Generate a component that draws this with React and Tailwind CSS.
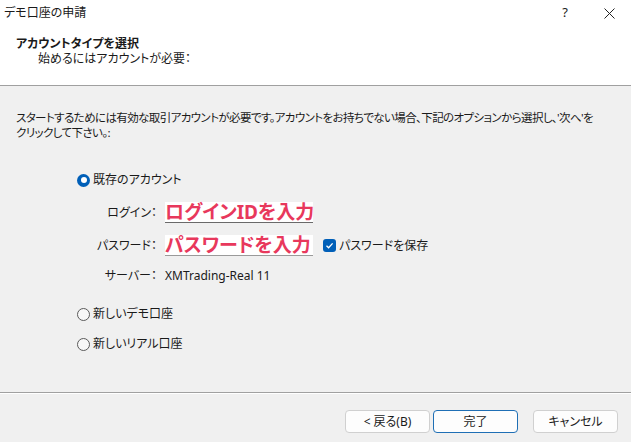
import React from 'react';

const font = "font-['Noto_Sans','Noto_Sans_CJK_JP',sans-serif] [font-feature-settings:'palt']";

const Radio = ({ checked, label }) => (
     <div className="flex items-center h-[16px] pl-[77px] gap-[3px]">
          {checked ? (
               <span className="w-[13px] h-[13px] rounded-full bg-[#005fb8] flex items-center justify-center">
                    <span className="w-[6px] h-[6px] rounded-full bg-white"></span>
               </span>
          ) : (
               <span className="w-[13px] h-[13px] rounded-full border border-[#5a5a5a] bg-[#f7f7f7]"></span>
          )}
          <span>{label}</span>
     </div>
);

const Button = ({ children, primary }) => (
     <button
          className={`w-[85px] h-[23px] rounded-[4px] bg-[#fdfdfd] text-[12px] text-[#1a1a1a] border ${primary ? 'border-[#1f6fb5]' : 'border-[#d0d0d0]'}`}
     >
          {children}
     </button>
);

export default function App() {
     return (
          <div className={`w-[631px] h-[442px] bg-[#f0f0f0] flex flex-col text-[12px] text-[#1a1a1a] ${font}`}>
               {/* header */}
               <div className="h-[86px] bg-white border-b border-[#a0a0a0] flex flex-col">
                    <div className="h-[26px] flex items-center justify-between pl-[4px] pr-[16px]">
                         <span>デモ口座の申請</span>
                         <div className="flex items-center gap-[36px]">
                              <span className="text-[13px]">?</span>
                              <svg width="11" height="11" viewBox="0 0 11 11" stroke="#222" strokeWidth="1">
                                   <path d="M0.5 0.5 L10.5 10.5 M10.5 0.5 L0.5 10.5" />
                              </svg>
                         </div>
                    </div>
                    <div className="pl-[16px] pt-[10px] leading-[15px]">
                         <div className="font-bold">アカウントタイプを選択</div>
                         <div className="pl-[22px]">始めるにはアカウントが必要：</div>
                    </div>
               </div>

               {/* body */}
               <div className="h-[306px] flex flex-col">
                    <div className="pl-[16px] pt-[24px] leading-[15px] whitespace-nowrap text-[11.5px] tracking-[-0.6px]">
                         スタートするためには有効な取引アカウントが必要です。アカウントをお持ちでない場合、下記のオプションから選択し、'次へ'を
                         <br />
                         クリックして下さい。:
                    </div>

                    <div className="mt-[32px]">
                         <Radio checked label="既存のアカウント" />
                    </div>

                    <div className="grid grid-cols-[157px_auto] gap-x-[8px] items-center mt-[14px]">
                         <span className="text-right">ログイン：</span>
                         <div className="w-[148px] h-[21px] bg-white border-b border-[#6a6a6a] flex items-center">
                              <span className="text-[19px] font-bold text-[#e8385c] leading-[21px] whitespace-nowrap">ログインIDを入力</span>
                         </div>

                         <span className="text-right mt-[12px]">パスワード：</span>
                         <div className="flex items-center mt-[12px]">
                              <div className="w-[148px] h-[21px] bg-white border-b border-[#9a9a9a] flex items-center">
                                   <span className="text-[19px] font-bold text-[#e8385c] leading-[21px] whitespace-nowrap">パスワードを入力</span>
                              </div>
                              <span className="ml-[10px] w-[13px] h-[13px] rounded-[3px] bg-[#005fb8] flex items-center justify-center">
                                   <svg width="9" height="9" viewBox="0 0 9 9" fill="none" stroke="white" strokeWidth="1.3">
                                        <path d="M1.5 4.8 L3.6 6.8 L7.6 2.4" />
                                   </svg>
                              </span>
                              <span className="ml-[3px]">パスワードを保存</span>
                         </div>

                         <span className="text-right mt-[12px] h-[16px] leading-[16px]">サーバー：</span>
                         <span className="mt-[12px] h-[16px] leading-[16px]">XMTrading-Real 11</span>
                    </div>

                    <div className="mt-[22px]">
                         <Radio label="新しいデモ口座" />
                    </div>
                    <div className="mt-[14px]">
                         <Radio label="新しいリアル口座" />
                    </div>
               </div>

               {/* footer */}
               <div className="border-t border-[#a0a0a0]"></div>
               <div className="border-t border-white flex-1 flex items-start justify-end pt-[16px] pr-[13px]">
                    <div className="flex gap-[3px]">
                         <Button>&lt; 戻る(B)</Button>
                         <Button primary>完了</Button>
                    </div>
                    <div className="ml-[15px]">
                         <Button>キャンセル</Button>
                    </div>
               </div>
          </div>
     );
}
